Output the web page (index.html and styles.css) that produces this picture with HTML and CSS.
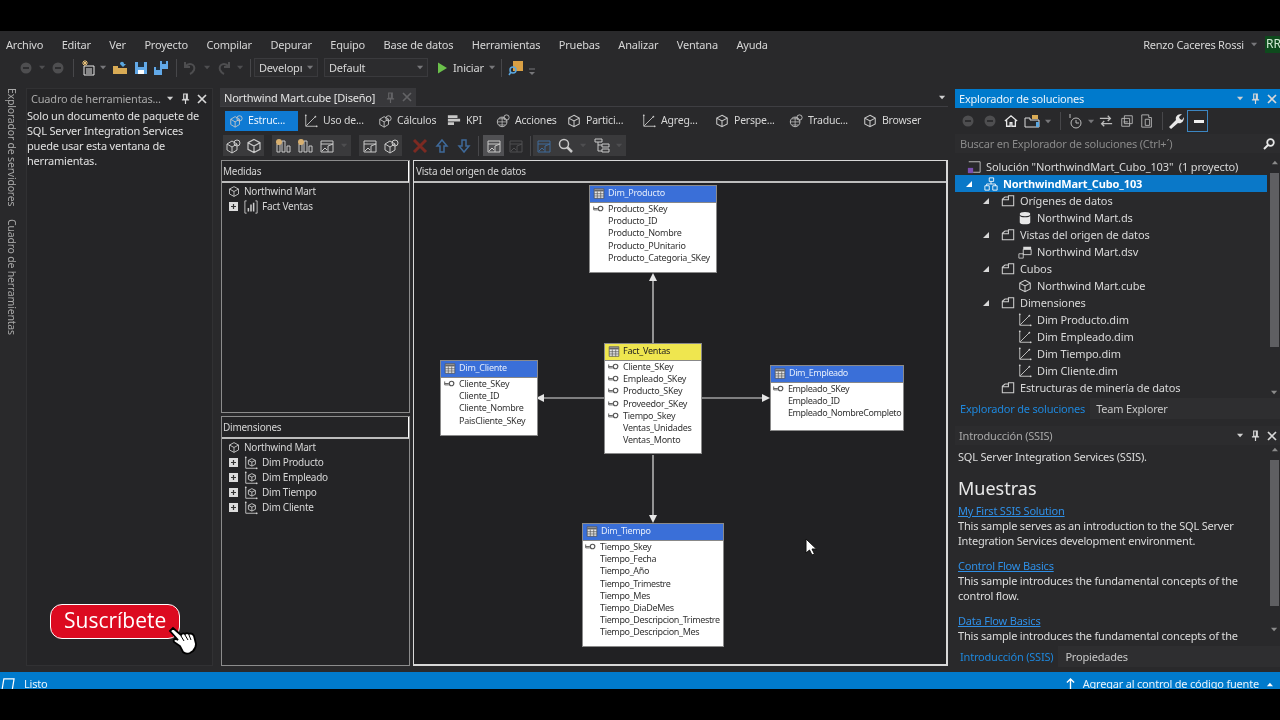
FILE: index.html
```html
<!DOCTYPE html>
<html lang="es">
<head>
<meta charset="utf-8">
<title>Northwind Mart.cube</title>
<link rel="stylesheet" href="styles.css">
</head>
<body>
<svg class="defs" width="0" height="0">
  <symbol id="cube" viewBox="0 0 16 16"><path d="M8 1.500l6 3.200v6.600l-6 3.200-6-3.200V4.700zM2 4.700l6 3.300 6-3.300M8 8v6.500" fill="none" stroke="currentColor" stroke-width="1.200"/></symbol>
  <symbol id="folder" viewBox="0 0 16 16"><path d="M1.500 13.500V6l3-2.500h4V2h6v11.500zM2 6.500h6.500V3" fill="none" stroke="currentColor" stroke-width="1.200"/></symbol>
  <symbol id="dim" viewBox="0 0 16 16"><path d="M2 1v13h13M2.500 13.500L13 3" fill="none" stroke="currentColor" stroke-width="1"/><circle cx="2" cy="1.500" r="1" fill="currentColor"/><circle cx="14.500" cy="14" r="1" fill="currentColor"/><circle cx="13" cy="3" r="1" fill="currentColor"/></symbol>
  <symbol id="dimcube" viewBox="0 0 16 16"><path d="M2 1v13h13" fill="none" stroke="currentColor"/><path d="M9 3l4 2v4.500l-4 2-4-2V5zM5 5l4 2 4-2M9 7v4.500" fill="none" stroke="currentColor"/><circle cx="2" cy="1.500" r="1" fill="currentColor"/><circle cx="14.500" cy="14" r="1" fill="currentColor"/></symbol>
  <symbol id="measure" viewBox="0 0 16 16"><path d="M3 1H1v14h2M13 1h2v14h-2" fill="none" stroke="currentColor"/><path d="M5 13V9M8 13V5M11 13V3" stroke="currentColor" stroke-width="1.700"/></symbol>
  <symbol id="grid" viewBox="0 0 16 16"><path d="M1 1h14v14H1z" fill="#e8e8e8" stroke="#444"/><path d="M1 2h14v3H1z" fill="#666"/><path d="M5.500 5v10M10.500 5v10M1 8.300h14M1 11.600h14" stroke="#555"/></symbol>
  <symbol id="key" viewBox="0 0 16 10"><path d="M1 2v5h6M1 5h6" fill="none" stroke="#555" stroke-width="1.300"/><circle cx="11" cy="5" r="3.300" fill="none" stroke="#555" stroke-width="1.700"/></symbol>
  <symbol id="caret" viewBox="0 0 8 5"><path d="M0 .5h7L3.500 4.500z" fill="currentColor"/></symbol>
  <symbol id="pin" viewBox="0 0 10 12"><path d="M3 1h4v6H3zM1 7.500h8M5 8v4M6 1v6" fill="none" stroke="currentColor" stroke-width="1.300"/></symbol>
  <symbol id="close" viewBox="0 0 10 10"><path d="M1 1l8 8M9 1L1 9" stroke="currentColor" stroke-width="1.700"/></symbol>
  <symbol id="plus" viewBox="0 0 9 9"><path d="M0 0h9v9H0z" fill="#dcdcdc"/><path d="M2 4.500h5M4.500 2v5" stroke="#333" stroke-width="1.200"/></symbol>
  <symbol id="nav" viewBox="0 0 12 12"><circle cx="6" cy="6" r="5.500" fill="currentColor"/><path d="M3 6h6" stroke="#2a2a2c" stroke-width="1.800"/></symbol>
  <symbol id="tree-open" viewBox="0 0 8 8"><path d="M7 1v6H1z" fill="currentColor"/></symbol>
  <symbol id="mix" viewBox="0 0 16 16"><path d="M2 6l5-3 5 3v6l-5 3-5-3zM2 6l5 3 5-3M7 9v6" fill="none" stroke="currentColor"/><circle cx="12" cy="5" r="3" fill="none" stroke="currentColor"/></symbol>
  <symbol id="bars" viewBox="0 0 16 16"><path d="M2 14V6h3v8zM7 14V3h3v11zM12 14V8h3v6z" fill="none" stroke="currentColor"/><circle cx="4" cy="4" r="3" fill="#d8b070"/></symbol>
  <symbol id="flat" viewBox="0 0 16 16"><path d="M1 3h11M1 7h14M1 11h7" stroke="currentColor" stroke-width="3"/></symbol>
  <symbol id="globe" viewBox="0 0 16 16"><circle cx="7" cy="9" r="5.500" fill="none" stroke="currentColor"/><path d="M1.500 9h11M7 3.500v11M3.500 5.500h7M3.500 12.500h7" stroke="currentColor" stroke-width=".8"/><circle cx="12" cy="4" r="3" fill="none" stroke="currentColor"/></symbol>
  <symbol id="page" viewBox="0 0 16 16"><path d="M2 14V3h12v11zM2 6h12M9 14V8l5-2" fill="none" stroke="currentColor"/><path d="M3 13l3-3 2 2" stroke="currentColor" fill="none"/></symbol>
</svg>

<div class="letterbox"></div>
<div class="app">
  <nav class="menu">
    <span>Archivo</span><span>Editar</span><span>Ver</span><span>Proyecto</span><span>Compilar</span><span>Depurar</span><span>Equipo</span><span>Base de datos</span><span>Herramientas</span><span>Pruebas</span><span>Analizar</span><span>Ventana</span><span>Ayuda</span>
    <div class="account"><span>Renzo Caceres Rossi</span><svg class="cr dim-c"><use href="#caret"/></svg><b class="badge">RR</b></div>
  </nav>

  <div class="toolbar">
    <svg class="i12 faint"><use href="#nav"/></svg><svg class="cr faint ml7"><use href="#caret"/></svg><svg class="i12 faint ml6"><use href="#nav"/></svg>
    <i class="sep ml9"></i>
    <svg class="i16 bright ml6" viewBox="0 0 16 16"><path d="M4 6h10v9H4z" fill="none" stroke="currentColor"/><path d="M6 9h6M6 11h6M6 13h6" stroke="currentColor"/><path d="M5 0v6M2 3h6M3 1l4 4M7 1L3 5" stroke="#e9c27a"/></svg><svg class="cr dim-c ml4"><use href="#caret"/></svg>
    <svg class="i16 ml5" viewBox="0 0 16 16"><path d="M1 14V6h5v2h9v6z" fill="#d9ab55"/><path d="M8 4c0-3 4-3 4 0h2l-3 3-3-3z" fill="#5aa7e0"/></svg>
    <svg class="i16 ml5" viewBox="0 0 16 16"><path d="M2 2h12v12H2z" fill="#62a9e8"/><path d="M5 2h6v5H5z" fill="#20303f"/><path d="M5 10h6v4H5z" fill="#fff"/></svg>
    <svg class="i16 ml4" viewBox="0 0 16 16"><path d="M1 7h8v8H1z" fill="#62a9e8"/><path d="M7 1h8v8H7z" fill="#62a9e8"/><path d="M9 1h4v3H9zM3 7h4v3H3z" fill="#20303f"/></svg>
    <i class="sep ml7"></i>
    <svg class="i16 faint ml5" viewBox="0 0 16 16"><path d="M3 2v5h5M3 7c4-5 11-3 9 3-1 2-2 3-4 4" fill="none" stroke="currentColor" stroke-width="2"/></svg><svg class="cr faint ml6"><use href="#caret"/></svg>
    <svg class="i16 faint ml5" viewBox="0 0 16 16"><path d="M13 2v5H8M13 7C9 2 2 4 4 10c1 2 2 3 4 4" fill="none" stroke="currentColor" stroke-width="2"/></svg><svg class="cr faint ml5"><use href="#caret"/></svg>
    <i class="sep ml6"></i>
    <div class="combo combo-a ml3"><span>Developı</span><svg class="cr dim-c"><use href="#caret"/></svg></div>
    <div class="combo combo-b ml6"><span>Default</span><svg class="cr dim-c"><use href="#caret"/></svg></div>
    <svg class="play ml10" viewBox="0 0 10 12"><path d="M0 0l10 6-10 6z" fill="#6bc04b"/></svg>
    <span class="start ml6">Iniciar</span><svg class="cr dim-c ml5"><use href="#caret"/></svg>
    <i class="sep ml5"></i>
    <svg class="i16 ml6" viewBox="0 0 16 16"><path d="M5 1h10v10H5z" fill="#d9a044"/><circle cx="5" cy="10" r="3" fill="none" stroke="#5aa7e0" stroke-width="1.500"/><path d="M3 12l-2 3" stroke="#5aa7e0" stroke-width="1.500"/></svg>
    <svg class="overflow dim-c ml4" viewBox="0 0 8 8"><path d="M1 1h6" stroke="currentColor"/><path d="M1 4h6L4 7z" fill="currentColor"/></svg>
  </div>

  <div class="workspace">
    <aside class="rail">
      <span class="rail-t">Explorador de servidores</span>
      <span class="rail-t">Cuadro de herramientas</span>
    </aside>

    <section class="toolbox">
      <header class="tool-title">
        <span class="grow">Cuadro de herramientas...</span>
        <svg class="cr"><use href="#caret"/></svg><svg class="ic-pin"><use href="#pin"/></svg><svg class="ic-x"><use href="#close"/></svg>
      </header>
      <p class="tool-text">Solo un documento de paquete de SQL Server Integration Services puede usar esta ventana de herramientas.</p>
      <div class="subscribe">
        <span>Suscríbete</span>
        <svg class="hand" viewBox="0 0 30 30"><path d="M2 5l3-3 8 7c1-2 3-2 4-1 1-1 3-1 4 0 2-1 4 0 5 2l2 8c0 3-1 5-3 7l-3 2c-3 1-5 1-7-1l-3-6-6-4c-1-2 0-3 2-3l2 1z" fill="#fff" stroke="#000" stroke-width="1.800"/><path d="M13 10l3 5M17 9l3 5M21 9l2 5" stroke="#000"/></svg>
      </div>
    </section>

    <main class="center">
      <div class="docstrip">
        <div class="doctab"><span class="grow">Northwind Mart.cube [Diseño]</span><svg class="ic-pin"><use href="#pin"/></svg><svg class="ic-x"><use href="#close"/></svg></div>
        <svg class="cr strip-caret"><use href="#caret"/></svg>
      </div>

      <div class="dtabs">
        <div class="dtab active"><svg class="i16"><use href="#mix"/></svg><span>Estruc...</span></div>
        <div class="dtab w2"><svg class="i16"><use href="#dim"/></svg><span>Uso de...</span></div>
        <div class="dtab w3"><svg class="i16"><use href="#mix"/></svg><span>Cálculos</span></div>
        <div class="dtab w4"><svg class="i16"><use href="#flat"/></svg><span>KPI</span></div>
        <div class="dtab w5"><svg class="i16"><use href="#globe"/></svg><span>Acciones</span></div>
        <div class="dtab w6"><svg class="i16"><use href="#cube"/></svg><span>Partici...</span></div>
        <div class="dtab w7"><svg class="i16"><use href="#dim"/></svg><span>Agreg...</span></div>
        <div class="dtab w8"><svg class="i16"><use href="#cube"/></svg><span>Perspe...</span></div>
        <div class="dtab w9"><svg class="i16"><use href="#globe"/></svg><span>Traduc...</span></div>
        <div class="dtab w10"><svg class="i16"><use href="#cube"/></svg><span>Browser</span></div>
      </div>

      <div class="subtools">
        <div class="grp g1"><svg class="i16"><use href="#mix"/></svg><svg class="i16"><use href="#cube"/></svg></div>
        <div class="grp g2 ml2"><svg class="i16"><use href="#bars"/></svg><svg class="i16"><use href="#bars"/></svg><svg class="i16"><use href="#page"/></svg><svg class="cr faint"><use href="#caret"/></svg></div>
        <div class="grp g3 ml2"><svg class="i16"><use href="#page"/></svg><svg class="i16"><use href="#mix"/></svg></div>
        <svg class="i16 red ml4" viewBox="0 0 16 16"><path d="M2 2l12 12M14 2L2 14" stroke="currentColor" stroke-width="3"/></svg>
        <svg class="i16 arrow-b" viewBox="0 0 16 16"><path d="M8 2l5 6h-3v6H6V8H3z" fill="none" stroke="currentColor" stroke-width="1.500"/></svg>
        <svg class="i16 arrow-b" viewBox="0 0 16 16"><path d="M8 14L3 8h3V2h4v6h3z" fill="none" stroke="currentColor" stroke-width="1.500"/></svg>
        <i class="sep"></i>
        <div class="grp g4 mln2"><svg class="i16"><use href="#page"/></svg></div>
        <svg class="i16 faint mln2"><use href="#page"/></svg>
        <i class="sep"></i>
        <div class="grp g5 mln4"><svg class="i16 arrow-b"><use href="#page"/></svg><svg class="i16" viewBox="0 0 16 16"><circle cx="6" cy="6" r="4.500" fill="none" stroke="currentColor" stroke-width="1.500"/><path d="M9 9l5 5" stroke="currentColor" stroke-width="2.500"/></svg><svg class="cr faint"><use href="#caret"/></svg><svg class="i16" viewBox="0 0 16 16"><path d="M1 1h7v3H1zM8 6h7v3H8zM8 11h7v3H8zM4 4v9h4M4 7h4" fill="none" stroke="currentColor"/></svg><svg class="cr faint"><use href="#caret"/></svg></div>
      </div>

      <div class="panes">
        <div class="pane-col">
          <section class="pane pane-m">
            <header class="pane-h">Medidas</header>
            <div class="pane-b">
              <div class="row"><svg class="i12-ic"><use href="#cube"/></svg><span>Northwind Mart</span></div>
              <div class="row child"><svg class="pl"><use href="#plus"/></svg><svg class="i14"><use href="#measure"/></svg><span>Fact Ventas</span></div>
            </div>
          </section>
          <section class="pane pane-d">
            <header class="pane-h">Dimensiones</header>
            <div class="pane-b">
              <div class="row"><svg class="i12-ic"><use href="#cube"/></svg><span>Northwind Mart</span></div>
              <div class="row child"><svg class="pl"><use href="#plus"/></svg><svg class="i14"><use href="#dimcube"/></svg><span>Dim Producto</span></div>
              <div class="row child"><svg class="pl"><use href="#plus"/></svg><svg class="i14"><use href="#dimcube"/></svg><span>Dim Empleado</span></div>
              <div class="row child"><svg class="pl"><use href="#plus"/></svg><svg class="i14"><use href="#dimcube"/></svg><span>Dim Tiempo</span></div>
              <div class="row child"><svg class="pl"><use href="#plus"/></svg><svg class="i14"><use href="#dimcube"/></svg><span>Dim Cliente</span></div>
            </div>
          </section>
        </div>

        <section class="pane pane-v">
          <header class="pane-h">Vista del origen de datos</header>
          <div class="diagram">
            <svg class="links" viewBox="0 0 533 482">
              <path class="ln" d="M239 160V93M190 215H127M288 215H352M239 272V334"/>
              <path class="hd" d="M239 90l-4 8h8zM122 215l8-4v8zM356 215l-8-4v8zM239 340l-4-8h8z"/>
            </svg>

            <article class="tbl t-prod">
              <header class="tbl-h"><svg class="tg"><use href="#grid"/></svg>Dim_Producto</header>
              <ul>
                <li class="pk"><svg class="k"><use href="#key"/></svg>Producto_SKey</li>
                <li>Producto_ID</li><li>Producto_Nombre</li><li>Producto_PUnitario</li><li>Producto_Categoria_SKey</li>
              </ul>
            </article>
            <article class="tbl t-fact">
              <header class="tbl-h fact"><svg class="tg"><use href="#grid"/></svg>Fact_Ventas</header>
              <ul>
                <li class="pk"><svg class="k"><use href="#key"/></svg>Cliente_SKey</li>
                <li class="pk"><svg class="k"><use href="#key"/></svg>Empleado_SKey</li>
                <li class="pk"><svg class="k"><use href="#key"/></svg>Producto_SKey</li>
                <li class="pk"><svg class="k"><use href="#key"/></svg>Proveedor_SKey</li>
                <li class="pk"><svg class="k"><use href="#key"/></svg>Tiempo_Skey</li>
                <li>Ventas_Unidades</li><li>Ventas_Monto</li>
              </ul>
            </article>
            <article class="tbl t-cli">
              <header class="tbl-h"><svg class="tg"><use href="#grid"/></svg>Dim_Cliente</header>
              <ul>
                <li class="pk"><svg class="k"><use href="#key"/></svg>Cliente_SKey</li>
                <li>Cliente_ID</li><li>Cliente_Nombre</li><li>PaisCliente_SKey</li>
              </ul>
            </article>
            <article class="tbl t-emp">
              <header class="tbl-h"><svg class="tg"><use href="#grid"/></svg>Dim_Empleado</header>
              <ul>
                <li class="pk"><svg class="k"><use href="#key"/></svg>Empleado_SKey</li>
                <li>Empleado_ID</li><li>Empleado_NombreCompleto</li>
              </ul>
            </article>
            <article class="tbl t-tie">
              <header class="tbl-h"><svg class="tg"><use href="#grid"/></svg>Dim_Tiempo</header>
              <ul>
                <li class="pk"><svg class="k"><use href="#key"/></svg>Tiempo_Skey</li>
                <li>Tiempo_Fecha</li><li>Tiempo_Año</li><li>Tiempo_Trimestre</li><li>Tiempo_Mes</li><li>Tiempo_DiaDeMes</li><li>Tiempo_Descripcion_Trimestre</li><li>Tiempo_Descripcion_Mes</li>
              </ul>
            </article>
            <svg class="pointer" viewBox="0 0 12 18"><path d="M1 1v14l3.500-3 2.500 5 2.500-1-2.500-5h4.500z" fill="#fff" stroke="#111"/></svg>
          </div>
        </section>
      </div>
    </main>

    <aside class="right">
      <section class="sol">
        <header class="ptitle active-title">
          <span class="grow">Explorador de soluciones</span>
          <svg class="cr"><use href="#caret"/></svg><svg class="ic-pin"><use href="#pin"/></svg><svg class="ic-x"><use href="#close"/></svg>
        </header>
        <div class="sol-tools">
          <svg class="i12 faint"><use href="#nav"/></svg><svg class="i12 faint ml10"><use href="#nav"/></svg>
          <svg class="i14 bright ml8" viewBox="0 0 16 16"><path d="M1 8l7-6 7 6M3 7v7h4v-4h2v4h4V7" fill="none" stroke="currentColor" stroke-width="1.500"/></svg>
          <svg class="i16 ml6" viewBox="0 0 16 16"><path d="M1 14V5h5v2h9v7z" fill="none" stroke="#ddd"/><path d="M8 2h6v4H8z" fill="#d9ab55"/><path d="M12 9h3v5h-3z" fill="#5aa7e0"/></svg><svg class="cr dim-c ml5"><use href="#caret"/></svg>
          <i class="sep ml8"></i>
          <svg class="i16 soft ml6" viewBox="0 0 16 16"><circle cx="9" cy="10" r="5" fill="none" stroke="currentColor"/><path d="M9 7v3h3M3 1v4" stroke="currentColor" fill="none"/></svg><svg class="cr dim-c ml5"><use href="#caret"/></svg>
          <svg class="i14 soft ml4" viewBox="0 0 16 16"><path d="M1 5h12M10 2l3 3-3 3M15 11H3M6 8l-3 3 3 3" fill="none" stroke="currentColor" stroke-width="1.500"/></svg>
          <svg class="i14 soft ml7" viewBox="0 0 16 16"><path d="M5 2h9v9H5zM2 5h9v9H2z" fill="#2a2a2c" stroke="currentColor"/><path d="M4 9h5" stroke="currentColor"/></svg>
          <svg class="i14 soft ml6" viewBox="0 0 16 16"><path d="M2 1h8v3h3v11H2z" fill="none" stroke="currentColor"/><path d="M6 6h5v7H6z" fill="none" stroke="currentColor"/></svg>
          <i class="sep ml8"></i>
          <svg class="i16 bright ml5" viewBox="0 0 16 16"><path d="M1 14l7-7c-1-3 1-6 6-6l-3 3 1 2 2 1 2-3c0 5-3 7-6 6l-7 6z" fill="currentColor"/></svg>
          <span class="toggled ml3"><i></i></span>
        </div>
        <div class="search"><span class="grow">Buscar en Explorador de soluciones (Ctrl+´)</span><svg class="i12 bright" viewBox="0 0 12 12"><circle cx="7.500" cy="4.500" r="3.300" fill="none" stroke="currentColor" stroke-width="1.800"/><path d="M5 7l-4 4" stroke="currentColor" stroke-width="2"/></svg></div>
        <div class="tree-wrap">
          <div class="tree">
            <div class="trow l0"><svg class="i14" viewBox="0 0 16 16"><path d="M2 2h13v12H7" fill="none" stroke="#ccc"/><path d="M1 9h6v6H1z" fill="#7a4fb0"/></svg><span>Solución "NorthwindMart_Cubo_103"  (1 proyecto)</span></div>
            <div class="trow l1 sel"><svg class="tw"><use href="#tree-open"/></svg><svg class="i14" viewBox="0 0 16 16"><path d="M6 1h5v4H6zM1 10h5v5H1zM10 10h5v5h-5zM8 5v3M3 10V8h10v2" fill="none" stroke="#fff"/></svg><b>NorthwindMart_Cubo_103</b></div>
            <div class="trow l2"><svg class="tw"><use href="#tree-open"/></svg><svg class="i14"><use href="#folder"/></svg><span>Orígenes de datos</span></div>
            <div class="trow l3"><svg class="i14 bright" viewBox="0 0 16 16"><ellipse cx="8" cy="3.500" rx="6" ry="2.500" fill="currentColor"/><path d="M2 5v8c0 3 12 3 12 0V5c0 3-12 3-12 0z" fill="currentColor"/></svg><span>Northwind Mart.ds</span></div>
            <div class="trow l2"><svg class="tw"><use href="#tree-open"/></svg><svg class="i14"><use href="#folder"/></svg><span>Vistas del origen de datos</span></div>
            <div class="trow l3"><svg class="i14" viewBox="0 0 16 16"><path d="M1 10h5v5H1z" fill="none" stroke="#ccc"/><path d="M6 2h9v3H6z" fill="#ddd"/><path d="M6 5h9v6H6z" fill="none" stroke="#ddd"/></svg><span>Northwind Mart.dsv</span></div>
            <div class="trow l2"><svg class="tw"><use href="#tree-open"/></svg><svg class="i14"><use href="#folder"/></svg><span>Cubos</span></div>
            <div class="trow l3"><svg class="i14"><use href="#cube"/></svg><span>Northwind Mart.cube</span></div>
            <div class="trow l2"><svg class="tw"><use href="#tree-open"/></svg><svg class="i14"><use href="#folder"/></svg><span>Dimensiones</span></div>
            <div class="trow l3"><svg class="i14"><use href="#dim"/></svg><span>Dim Producto.dim</span></div>
            <div class="trow l3"><svg class="i14"><use href="#dim"/></svg><span>Dim Empleado.dim</span></div>
            <div class="trow l3"><svg class="i14"><use href="#dim"/></svg><span>Dim Tiempo.dim</span></div>
            <div class="trow l3"><svg class="i14"><use href="#dim"/></svg><span>Dim Cliente.dim</span></div>
            <div class="trow l2"><i class="tw"></i><svg class="i14"><use href="#folder"/></svg><span>Estructuras de minería de datos</span></div>
          </div>
          <div class="sbar sbar-a"><svg class="cr up"><use href="#caret"/></svg><i class="thumb"></i><svg class="cr"><use href="#caret"/></svg></div>
        </div>
        <div class="ptabs"><span class="ptab-on">Explorador de soluciones</span><span class="ptab-off">Team Explorer</span></div>
      </section>

      <section class="intro">
        <header class="ptitle">
          <span class="grow">Introducción (SSIS)</span>
          <svg class="cr"><use href="#caret"/></svg><svg class="ic-pin"><use href="#pin"/></svg><svg class="ic-x"><use href="#close"/></svg>
        </header>
        <div class="intro-wrap">
          <div class="intro-body">
            <p>SQL Server Integration Services (SSIS).</p>
            <h2>Muestras</h2>
            <a href="#">My First SSIS Solution</a>
            <p>This sample serves as an introduction to the SQL Server Integration Services development environment.</p>
            <a href="#">Control Flow Basics</a>
            <p>This sample introduces the fundamental concepts of the control flow.</p>
            <a href="#">Data Flow Basics</a>
            <p>This sample introduces the fundamental concepts of the</p>
          </div>
          <div class="sbar sbar-b"><svg class="cr up"><use href="#caret"/></svg><i class="thumb"></i><svg class="cr"><use href="#caret"/></svg></div>
        </div>
        <div class="ptabs ptabs-b"><span class="ptab-on">Introducción (SSIS)</span><span class="ptab-off ptab-prop">Propiedades</span></div>
      </section>
    </aside>
  </div>

  <footer class="status">
    <svg class="st-ic" viewBox="0 0 16 14"><path d="M3 1h11l-2 12H1z" fill="none" stroke="#fff" stroke-width="1.300"/></svg>
    <span class="grow">Listo</span>
    <svg class="st-arrow" viewBox="0 0 10 12"><path d="M5 1v11M1 5l4-4 4 4" fill="none" stroke="#fff" stroke-width="1.500"/></svg>
    <span class="st-text">Agregar al control de código fuente</span>
    <svg class="cr st-cr up"><use href="#caret"/></svg>
  </footer>
</div>
<div class="letterbox"></div>
</body>
</html>
```

FILE: styles.css
```css
* { box-sizing: border-box; }
html, body { margin: 0; height: 720px; overflow: hidden; background: #000; }
body { font: 11px/15px "Noto Sans", "Open Sans", sans-serif; letter-spacing: -.2px; color: #d6d6d6; display: flex; flex-direction: column; }
.defs { position: absolute; }
svg { flex: none; display: block; }
p, h2, ul { margin: 0; padding: 0; }
i { font-style: normal; }
.grow { flex: 1; min-width: 0; white-space: nowrap; }

.ml2 { margin-left: 2px; } .ml3 { margin-left: 3px; } .ml4 { margin-left: 4px; } .ml5 { margin-left: 5px; }
.ml6 { margin-left: 6px; } .ml7 { margin-left: 7px; } .ml8 { margin-left: 8px; } .ml9 { margin-left: 9px; }
.ml10 { margin-left: 10px; } .mln2 { margin-left: -2px; } .mln4 { margin-left: -4px; }

.letterbox { height: 31px; background: #000; flex: none; }
.app { height: 658px; background: #29292b; display: flex; flex-direction: column; overflow: hidden; filter: blur(.35px); }

.i12 { width: 12px; height: 12px; }
.i14 { width: 14px; height: 14px; color: #cfcfcf; }
.i16 { width: 16px; height: 16px; color: #c8c8c8; }
.cr { width: 7px; height: 5px; color: #d0d0d0; }
.up { transform: rotate(180deg); }
.faint { color: #4e4e50; }
.dim-c { color: #77777a; }
.soft { color: #bcbcbc; }
.bright { color: #e8e8e8; }
.red { color: #7c2a22; }
.arrow-b { color: #3f6a9a; }
.sep { width: 1px; height: 18px; background: #47474a; flex: none; }
.ic-pin { width: 9px; height: 11px; color: #d8d8d8; }
.ic-x { width: 10px; height: 10px; color: #d8d8d8; }

.menu { height: 27px; flex: none; display: flex; align-items: center; gap: 18.500px; padding-left: 6px; }
.account { margin-left: auto; display: flex; align-items: center; gap: 7px; margin-right: -1px; }
.badge { width: 16px; height: 17px; background: #0e4a1d; color: #cfe8d2; font-weight: 400; font-size: 12px; letter-spacing: 0; overflow: hidden; white-space: nowrap; padding-left: 1px; }

.toolbar { height: 30px; flex: none; padding: 0 0 11px 20px; display: flex; align-items: center; }
.combo { height: 19px; display: flex; align-items: center; justify-content: space-between; border: 1px solid #3a3a3d; background: #2c2c2e; padding: 0 3px 0 4px; }
.combo-a { width: 64px; }
.combo-b { width: 104px; }
.play { width: 9px; height: 12px; }
.overflow { width: 8px; height: 8px; margin-top: 8px; }

.workspace { flex: 1; min-height: 0; display: flex; }
.rail { width: 26px; flex: none; display: flex; flex-direction: column; align-items: center; gap: 13px; padding: 0 2px 0 0; color: #a9a9a9; font-size: 10.500px; }
.rail-t { writing-mode: vertical-rl; line-height: 14px; }

.toolbox { width: 187px; flex: none; height: 578px; background: #252527; border: 1px solid #313133; position: relative; }
.tool-title { height: 19px; display: flex; align-items: center; gap: 7px; padding: 0 5px 0 4px; color: #a8a8a8; }
.tool-text { padding: 0 2px 0 0; color: #e0e0e0; }
.subscribe { position: absolute; left: 23px; top: 515px; width: 130px; height: 35px; background: #dc0a20; border: 1.500px solid #fff; border-radius: 12px; color: #fff; font: 21px/31px "Open Sans", sans-serif; letter-spacing: 0; padding-left: 13px; }
.hand { position: absolute; left: 117px; top: 21px; width: 30px; height: 30px; }

.center { width: 728px; margin-left: 7px; flex: none; display: flex; flex-direction: column; height: 578px; }
.docstrip { height: 19px; display: flex; align-items: center; justify-content: space-between; border-bottom: 1px solid #3e3e42; padding-right: 2px; flex: none; }
.doctab { width: 196px; height: 18px; background: #38383b; display: flex; align-items: center; gap: 7px; padding: 0 4px; color: #e4e4e4; }
.doctab .ic-pin, .doctab .ic-x { color: #636366; }
.dtabs { height: 25px; flex: none; padding: 4px 0 0 5px; display: flex; align-items: flex-start; }
.dtab { height: 20px; display: flex; align-items: center; gap: 5px; padding-left: 3px; white-space: nowrap; font-size: 10.500px; padding-bottom: 1px; }
.dtab .i16 { width: 14px; height: 14px; }
.dtab.active { width: 73px; background: #0f7ad3; color: #eaf4ff; padding-left: 4px; }
.dtab.w2 { width: 74px; margin-left: 3px; } .dtab.w3 { width: 69px; } .dtab.w4 { width: 49px; } .dtab.w5 { width: 71px; }
.dtab.w6 { width: 75px; } .dtab.w7 { width: 73px; } .dtab.w8 { width: 74px; } .dtab.w9 { width: 74px; } .dtab.w10 { width: 60px; }
.subtools { height: 25px; flex: none; padding: 2px 0 0 3px; display: flex; align-items: center; gap: 6px; }
.grp { height: 21px; background: #3a3a3c; display: flex; align-items: center; justify-content: space-around; }
.g1 { width: 41px; } .g2 { width: 79px; } .g3 { width: 43px; } .g4 { width: 21px; background: #505053; } .g5 { width: 93px; }
.subtools .sep { height: 20px; }

.panes { height: 506px; flex: none; display: flex; margin: 3px 0 0 1px; gap: 3px; }
.pane-col { width: 189px; flex: none; display: flex; flex-direction: column; gap: 3px; }
.pane { border: 1px solid #8c8c8c; background: #242426; min-height: 0; font-size: 10px; letter-spacing: -.25px; }
.pane-m { height: 253px; }
.pane-d { height: 250px; }
.pane-v { width: 535px; flex: none; display: flex; flex-direction: column; border-right-width: 2px; border-bottom-width: 2px; border-color: #d8d8d8; }
.pane-h { height: 22px; line-height: 20px; padding-left: 1px; border-right: 1px solid #fff; border-bottom: 2px solid #bdbdbd; color: #d4d4d4; flex: none; }
.pane-v .pane-h { border-right: 0; padding-left: 2px; }
.pane-b { padding-top: 1px; }
.row { height: 15px; display: flex; align-items: center; padding-left: 6px; gap: 4px; }
.i12-ic { width: 12px; height: 13px; color: #c8c8c8; }
.row.child { padding-left: 7px; gap: 4px; }
.pl { width: 9px; height: 9px; }
.row.child .i14 { width: 14px; height: 14px; margin-left: 2px; }

.diagram { flex: 1; position: relative; background: #212123; overflow: hidden; }
.links { position: absolute; inset: 0; width: 533px; height: 482px; }
.ln { stroke: #dedede; stroke-width: 1.200; fill: none; }
.hd { fill: #e6e6e6; }
.tbl { position: absolute; background: #fff; border: 1px solid #8a8a8a; color: #333; font: 9px/12.200px "Noto Sans", sans-serif; letter-spacing: -.25px; }
.tbl-h { height: 17px; background: #3a6fd8; color: #e4ecfb; display: flex; align-items: center; gap: 3px; padding: 0 0 1px 3px; border-bottom: 1px solid #888; }
.tbl-h.fact { background: #efe64f; color: #222; }
.tg { width: 12px; height: 11px; }
.tbl ul { list-style: none; padding: 0 0 0 18px; }
.tbl li { white-space: nowrap; }
.pk { position: relative; }
.k { position: absolute; left: -15px; top: 2px; width: 11px; height: 7px; }
.t-prod { left: 175px; top: 2px; width: 128px; height: 88px; }
.t-fact { left: 190px; top: 160px; width: 98px; height: 111px; }
.t-cli  { left: 26px; top: 177px; width: 98px; height: 76px; }
.t-emp  { left: 356px; top: 182px; width: 134px; height: 66px; letter-spacing: -.4px; }
.t-emp ul { padding-left: 17px; }
.t-tie  { left: 168px; top: 340px; width: 142px; height: 124px; letter-spacing: -.35px; }
.t-tie ul { padding-left: 17px; }
.pointer { position: absolute; left: 391px; top: 355px; width: 12px; height: 18px; }

.right { width: 325px; margin-left: 7px; flex: none; height: 579px; display: flex; flex-direction: column; }
.ptitle { height: 19px; flex: none; display: flex; align-items: center; gap: 7px; padding: 0 3px 0 4px; color: #a8a8a8; background: #2c2c2e; }
.active-title { background: #007acc; color: #e8f3fb; margin-top: 1px; }
.sol { height: 331px; flex: none; display: flex; flex-direction: column; }
.sol-tools { height: 26px; flex: none; display: flex; align-items: center; padding: 0 0 0 7px; }
.toggled { width: 21px; height: 22px; border: 1px solid #3c86c2; display: flex; align-items: center; justify-content: flex-end; padding: 0 3px 0 0; }
.toggled i { width: 10px; height: 3px; background: #eee; }
.search { height: 19px; flex: none; display: flex; align-items: center; padding: 0 5px 0 5px; color: #8a8a8a; background: #2c2c2e; }
.tree-wrap { height: 245px; flex: none; display: flex; padding-top: 5px; }
.tree { width: 312px; flex: none; overflow: hidden; letter-spacing: -.13px; }
.trow { height: 17px; display: flex; align-items: center; white-space: pre; color: #d8d8d8; }
.trow .i14 { margin-right: 5px; }
.tw { width: 8px; height: 8px; margin-right: 11px; color: #d8d8d8; display: block; flex: none; }
.l0 { padding-left: 12px; }
.l1 { padding-left: 10px; }
.l2 { padding-left: 27px; }
.l3 { padding-left: 63px; }
.sel { background: #0a78c8; color: #fff; }
.sel b { font-weight: 700; }
.sel .tw { color: #fff; }
.sbar { width: 10px; margin-left: 2px; flex: none; display: flex; flex-direction: column; align-items: center; }
.sbar .cr { color: #8b8b8b; margin: 2px 0; }
.thumb { display: block; width: 9px; background: #5f5f62; }
.sbar-a .thumb { height: 174px; margin: 6px 0 41px; }
.sbar-b .thumb { height: 146px; margin: 6px 0 19px; }
.ptabs { height: 21px; flex: none; display: flex; align-items: center; }
.ptab-on { color: #1e87dc; padding: 0 5px; white-space: nowrap; }
.ptab-off { flex: 1; height: 100%; background: #2e2e30; padding: 3px 0 0 6px; color: #c8c8c8; }
.ptab-prop { padding-left: 7px; }
.intro { margin-top: 7px; height: 241px; flex: none; display: flex; flex-direction: column; }
.intro-wrap { height: 201px; flex: none; display: flex; overflow: hidden; }
.intro-body { width: 312px; flex: none; padding: 4px 16px 0 3px; color: #dcdcdc; overflow: hidden; }
.intro-body h2 { font-size: 18px; font-weight: 400; line-height: 24px; margin: 12px 0 3px; color: #e8e8e8; letter-spacing: 0; }
.intro-body a { display: block; color: #2f8fe6; }
.intro-body p + a { margin-top: 10px; }

.status { height: 17px; flex: none; margin-top: auto; background: #007acc; color: #e6f3fb; display: flex; align-items: flex-start; padding: 4px 7px 0 0; overflow: hidden; }
.st-ic { width: 15px; height: 13px; margin: 2px 8px 0 1px; }
.st-arrow { width: 9px; height: 11px; margin: 2px 8px 0 0; }
.st-cr { color: #fff; margin: 6px 0 0 7px; }
```
